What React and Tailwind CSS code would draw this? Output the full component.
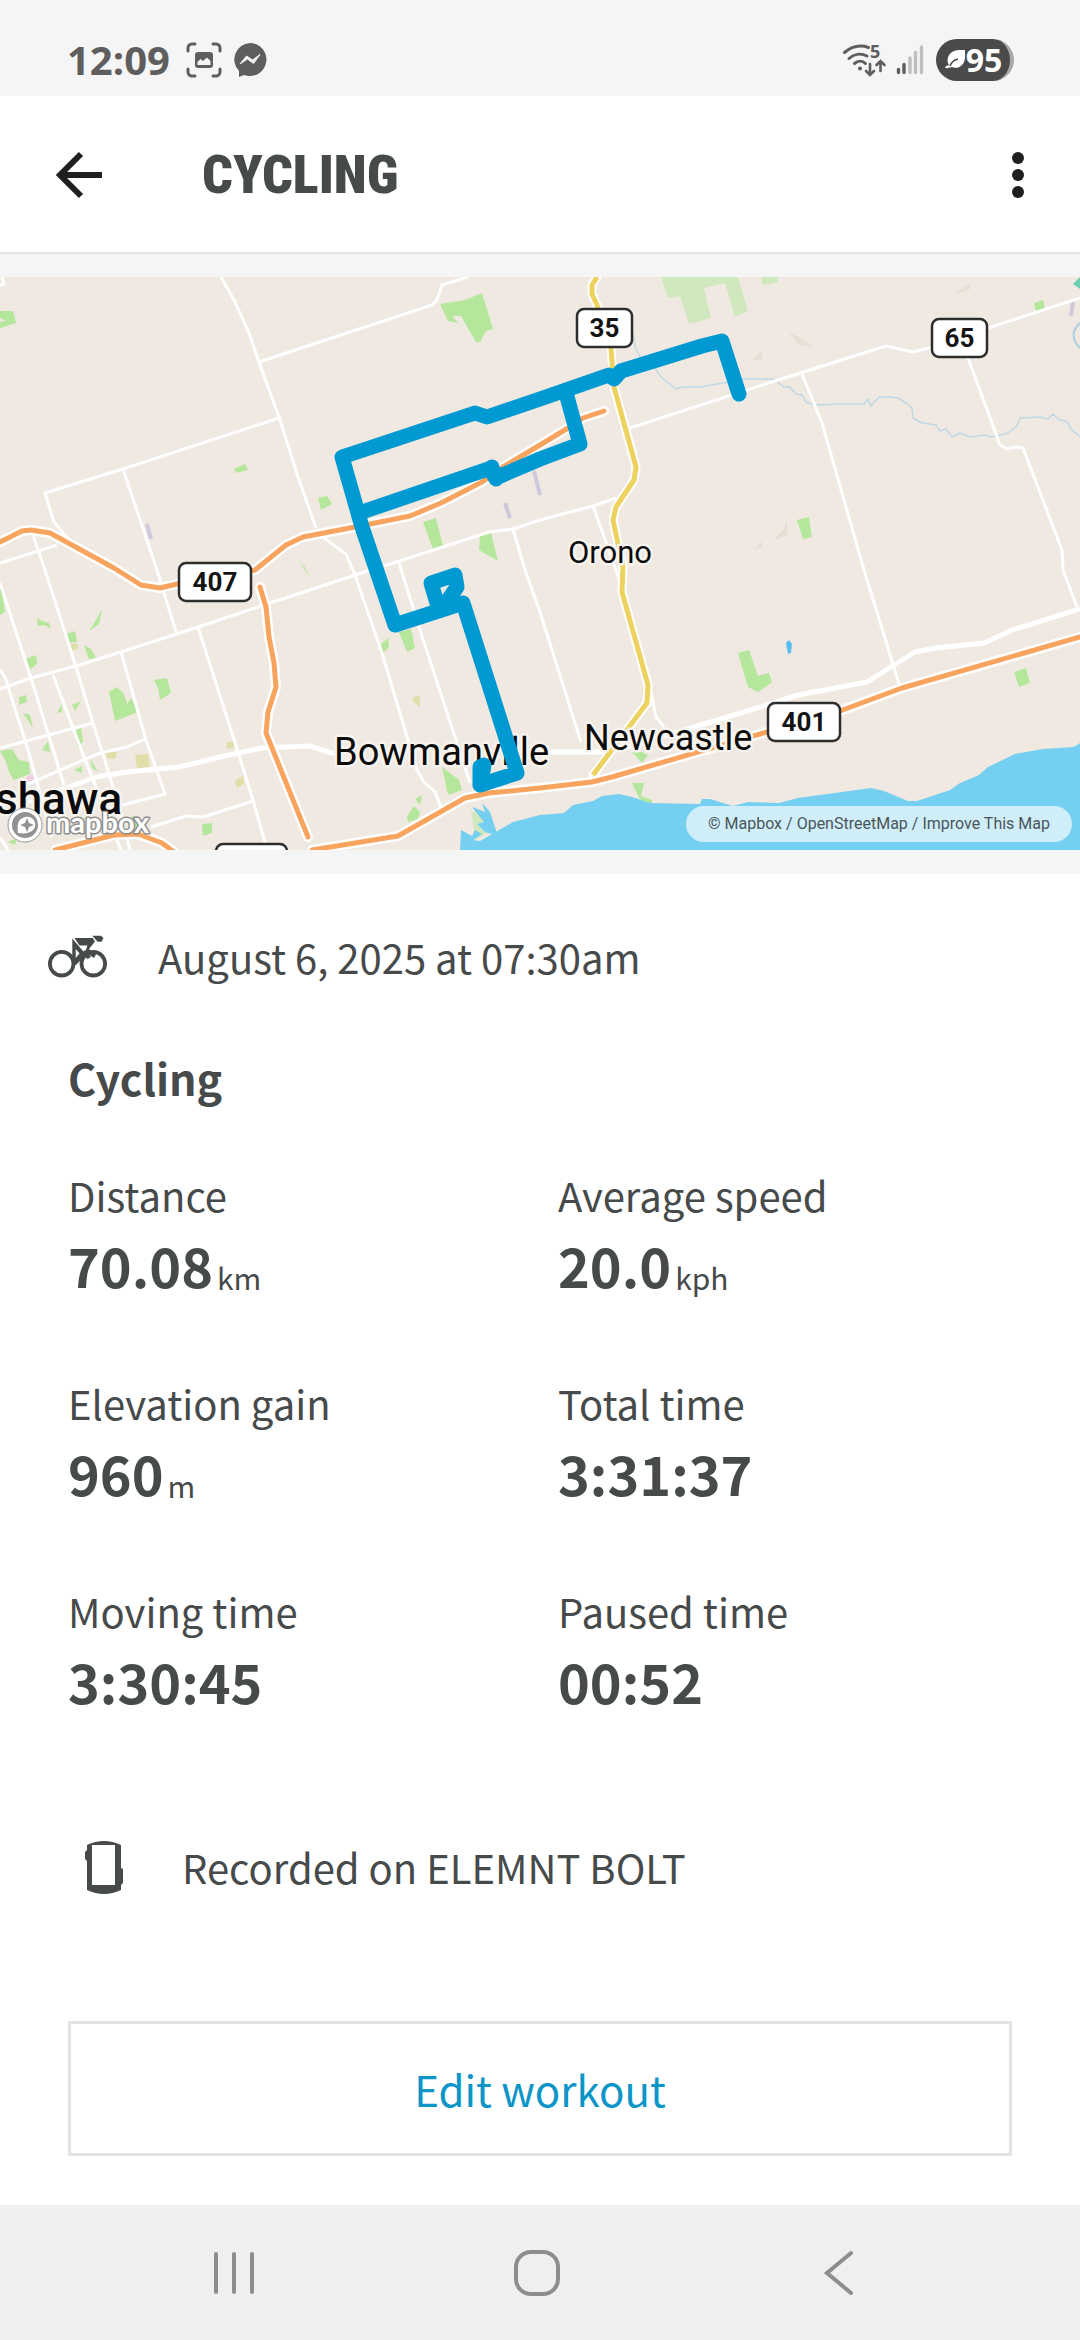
import React from "react";

const stats = [
  { label: "Distance", value: "70.08", unit: "km" },
  { label: "Average speed", value: "20.0", unit: "kph" },
  { label: "Elevation gain", value: "960", unit: "m" },
  { label: "Total time", value: "3:31:37" },
  { label: "Moving time", value: "3:30:45" },
  { label: "Paused time", value: "00:52" },
];

const shields = [
  { label: "35", x: 577, y: 32, w: 55 },
  { label: "65", x: 932, y: 42, w: 55 },
  { label: "407", x: 179, y: 286, w: 72 },
  { label: "401", x: 768, y: 426, w: 72 },
  { label: "", x: 216, y: 567, w: 71 },
];

const minorRoads = [
  "M221 0L235 25L249 56L259 85L279 140L298 200L316 251",
  "M259 85L432 28L437 23L442 8L468 0",
  "M279 141L123 192L45 216L54 245L65 258L69 263",
  "M123 192L157 293L176 355",
  "M0 8L4 7L2 0",
  "M33 258L45 293L76 390L93 446L110 500L130 573",
  "M0 286L57 268",
  "M324 261L346 277L355 298L382 376L417 493L424 505L435 515L441 530",
  "M384 289L489 255L513 252L540 243L593 229L616 221",
  "M0 412L31 401L76 389L121 375L198 350L355 298L371 293",
  "M513 252L525 293L540 335L581 465",
  "M593 229L616 293L650 410L656 440L664 450",
  "M399 286L420 353L470 506",
  "M198 350L238 475L253 523L267 573",
  "M121 375L146 463L165 517L103 533",
  "M53 398L84 480L104 530L121 573",
  "M0 306L31 401L64 508",
  "M0 393L5 400L28 473L52 560",
  "M0 471L93 446",
  "M21 510L100 476L127 470L145 462",
  "M151 550L186 539L203 540L253 524",
  "M0 560L8 573",
  "M630 151L778 103L886 69L913 75L933 70L988 51L1080 21",
  "M802 97L822 146L864 293L900 410",
  "M968 81L1000 168L1007 172L1015 170L1023 171L1062 273L1063 293L1077 330",
];

const mainRoads = [
  "M30 524L52 516L96 500L127 495L179 490L220 480L262 471L310 469L332 476",
  "M550 475L609 475L691 451L767 428L798 418L867 405L915 375L936 371L984 366L1012 353L1080 332",
];

const highways = [
  "M0 265L22 254L31 253L50 256L114 291L141 308L160 311L177 307L255 293L286 268L303 260L355 250L410 239L441 226L482 205L503 190L540 168L568 151L583 141L604 134",
  "M260 310L266 330L269 360L274 386L276 410L268 435L266 456L308 560",
  "M55 573L114 558L138 557L162 566L174 575",
  "M312 573L398 559L465 521L489 516L540 511L592 505L612 500L767 455L840 434L902 411L1080 360",
];

const yellowRoad =
  "M597 0L592 8L592 17L597 28L611 71L614 110L636 190L634 203L616 230L613 243L623 290L622 315L648 408L647 426L593 498";

const parks = [
  "M440 27L465 23L482 16L493 52L486 54L480 65L476 65L461 39L452 39L458 46L448 44Z",
  "M0 34L13 34L16 46L0 51L0 45L6 44L0 41Z",
  "M234 192L245 187L248 193L236 196Z",
  "M318 221L327 219L332 227L321 233Z",
  "M423 245L436 241L443 269L433 272Z",
  "M480 258L491 256L498 284L479 273Z",
  "M797 243L809 240L812 260L803 262Z",
  "M738 376L749 373L758 399L769 396L772 405L758 415L748 410Z",
  "M1014 395L1026 391L1030 406L1019 410Z",
  "M1034 26L1043 23L1045 32L1036 35Z",
  "M109 415L117 410L124 417L127 427L131 421L138 435L115 444Z",
  "M154 403L167 401L171 416L160 423L158 411Z",
  "M25 382L36 378L37 387L29 393Z",
  "M67 357L75 354L77 365L69 366Z",
  "M84 368L91 372L96 381L89 382Z",
  "M0 305L5 335L0 338Z",
  "M0 474L12 472L19 483L29 485L30 497L14 503L9 495L6 485Z",
  "M19 420L26 418L27 425L19 428Z",
  "M23 436L30 438L33 451Z",
  "M72 428L81 424L75 434Z",
  "M57 436L62 427L62 435Z",
  "M74 455L81 450L83 464L78 471Z",
  "M42 473L48 464L50 475Z",
  "M37 341L42 344L49 346L51 352L45 348L38 349Z",
  "M89 354L96 343L102 332L99 347Z",
  "M202 547L212 546L212 556L203 559Z",
  "M379 369L388 361L389 370L381 378Z",
  "M399 355L411 352L415 371L407 375Z",
  "M442 490L459 503L462 513L448 518Z",
  "M407 539L414 529L420 535L418 542L408 545Z",
  "M415 522L422 518L420 528Z",
  "M632 475L642 475L648 478L642 486Z",
  "M632 506L644 506L641 519L652 523L652 527L640 523Z",
  "M8 565L17 561L15 568Z",
  "M74 493L82 489L82 496Z",
  "M90 481L98 495L92 491Z",
  "M127 543L136 538L139 549L130 553Z",
];

const lake =
  "M461 573L472 563L480 564L513 545L540 538L564 536L573 528L593 524L602 519L619 517L632 520L650 526L700 527L702 522L710 522L733 529L748 525L779 526L798 521L871 511L884 514L908 524L917 524L950 513L960 506L979 498L988 490L1015 477L1043 472L1074 470L1080 466V573Z";

const river =
  "M631 45L635 70L640 80L655 91L661 100L676 112L683 110L700 110L723 106L745 102L774 102L784 110L790 110L796 117L802 118L806 125L815 128L840 127L864 127L868 122L871 129L879 120L890 120L898 121L906 126L912 131L913 141L922 146L936 148L940 154L946 152L952 160L960 156L970 160L985 158L992 160L1008 156L1016 150L1020 141L1040 140L1048 142L1053 137L1058 142L1067 145L1072 153L1080 160";

const routes = [
  "M739 117L722 64L702 69L621 94L614 102L609 98L540 122L487 140L475 136L342 180L362 250L395 348L463 326L517 496L480 508L480 490L484 488L483 494",
  "M566 116L580 167L540 182L498 200L491 191L362 235",
  "M492 190L490 192L496 202L500 198",
  "M437 326L431 306L455 298L457 310L446 326",
];

const StatusBar = () => (
  <div className="flex h-24 items-center justify-between bg-[#f5f5f5] pt-6 pr-[66px] pl-[67px] text-[#5e5e5e]">
    <div className="flex items-center">
      <span className="font-['Open_Sans',sans-serif] text-[40px] leading-10 font-bold">12:09</span>
      <svg className="ml-4 h-9 w-9" viewBox="0 0 36 36" fill="none" stroke="currentColor" strokeWidth="3" strokeLinecap="round">
        <path d="M2 9V6a4 4 0 0 1 4-4h3M27 2h3a4 4 0 0 1 4 4v3M34 27v3a4 4 0 0 1-4 4h-3M9 34H6a4 4 0 0 1-4-4v-3" />
        <rect x="9" y="10" width="18" height="16" rx="3" fill="currentColor" stroke="none" />
        <path d="M11.500 23v-3l3-3 2.500 2 4-3.500 3.500 3.500v4z" fill="#f5f5f5" stroke="none" />
      </svg>
      <svg className="ml-2.5 h-9 w-9" viewBox="0 0 36 36" fill="currentColor">
        <path d="M18 1a16.500 16.500 0 1 1-6 31.900L7 35v-6A16.500 16.500 0 0 1 18 1z" />
        <path d="M8 22l6.500-8 6 4 7.500-5.500-6.500 9-6-4.500z" fill="#f5f5f5" stroke="#f5f5f5" strokeLinejoin="round" />
      </svg>
    </div>
    <div className="flex items-center">
      <svg className="h-9 w-[43px] overflow-visible" viewBox="0 0 43 36" fill="none" stroke="currentColor" strokeWidth="3" strokeLinecap="round">
        <path d="M1.500 10.500C9 4 18 3 25.500 5.500M6 16.500c5-4.500 12-5.500 18-2.500M11.500 21.500c3.500-3 8-3 11 0" />
        <circle cx="17" cy="26.500" r="2" fill="currentColor" stroke="none" />
        <path d="M27 22v10M23 29l4 4 4-4M37.500 29V19M33.500 23l4-4 4 4" strokeWidth="2.600" />
        <text x="27" y="16" className="font-['Noto_Sans',sans-serif] text-[18px] font-bold" fill="currentColor" stroke="none">5</text>
      </svg>
      <svg className="ml-2.5 h-9 w-7" viewBox="0 0 28 36" stroke="currentColor" strokeWidth="3.400" strokeLinecap="round">
        <path d="M2.500 27.500v3M8 22.500v8" />
        <path d="M14 16v14.500M19.500 10.500v20M25.500 5v25.500" opacity=".35" />
      </svg>
      <div className="ml-3 flex h-[42px] w-[78px] items-center justify-center rounded-full border-r-4 border-[#a8a8a8] bg-[#4a4a4a] text-white">
        <svg className="h-6 w-[22px]" viewBox="0 0 22 24" fill="#fff">
          <path d="M21 2c0 6 1 11-3 15-3 3-7 3.500-10 2-2 .500-4 1.500-7 1 .500-2 2-2.500 4-3C2 12 4 7 8 4c4-2.500 9-2 13-2z" />
          <path d="M6 18c1-3 4-6 8-7" stroke="#4a4a4a" strokeWidth="1.600" fill="none" />
        </svg>
        <span className="font-['Open_Sans',sans-serif] text-[32px] leading-10 font-bold">95</span>
      </div>
    </div>
  </div>
);

const RouteMap = () => (
  <div className="relative font-['Roboto',sans-serif]">
    <svg className="block h-auto w-full" viewBox="0 0 1080 573" fill="none" strokeLinejoin="round">
      <rect width="1080" height="573" fill="#f0e9e1" />
      <path d="M661 0H738L748 34L735 40L725 6L704 11L711 41L689 47L680 19L668 21ZM761 0H778V5L763 8Z" fill="#d0e8bd" />
      {parks.map((d) => (
        <path key={d} d={d} fill="#b4e79b" />
      ))}
      <path d="M299 283L305 289L310 300L304 293Z" fill="#d0e8bd" />
      <path d="M70 367h8v5l-6 2zM105 475l12 0-2 7-8-1zM135 478l13-1 2 13-13 1zM226 466l8-2v7l-7 1zM235 504l8-5 1 8-7 4zM412 421l8-3v12l-6-5z" fill="#e2deaa" />
      <path d="M26 500l7-3 2 6-8 3z" fill="#f1cfe0" />
      <path d="M954 18L970 6V12ZM789 55L800 61L814 70L798 68ZM750 84L762 74V82ZM773 264L784 252L787 242V258ZM754 273L762 264V270Z" fill="#e7dfd5" />
      <path d="M147 247L151 262M505 226L510 241M534 194L540 218M1073 25L1071 39" stroke="#cdc8db" strokeWidth="4" />
      <path d={river} stroke="#bfd8e5" strokeWidth="1.500" />
      <path d={lake} fill="#75cff0" />
      <path d="M471 536l8-3 9 22-12 8z" fill="#d0e8bd" />
      <path d="M472 530l13 5-3-9 8 9 4 12 4 12-13-4-8-8 7-2zM461 553l11 6 3-6 7 4-10 7-12 10z" fill="#75cff0" />
      <path d="M786 366l3-3 3 4-1 9-3 1z" fill="#58bdf0" />
      <path d="M1073 7L1080 0V12Z" fill="#6fcfb5" />
      <path d="M1080 46Q1067 58 1080 71" stroke="#a8cfe3" strokeWidth="2" />
      {minorRoads.map((d) => (
        <path key={d} d={d} stroke="#fff" strokeWidth="3" />
      ))}
      {mainRoads.map((d) => (
        <path key={d} d={d} stroke="#fff" strokeWidth="5" strokeLinecap="round" />
      ))}
      {highways.map((d) => (
        <path key={d} d={d} stroke="#fff" strokeWidth="10" strokeLinecap="round" />
      ))}
      <path d={yellowRoad} stroke="#fff" strokeWidth="9" strokeLinecap="round" />
      <path d={yellowRoad} stroke="#edd25f" strokeWidth="5" />
      {highways.map((d) => (
        <path key={d} d={d} stroke="#f8a45e" strokeWidth="5" strokeLinecap="round" />
      ))}
      <g fill="#0b0b0b" stroke="#f7f3ee" strokeWidth="5" paintOrder="stroke">
        <text x="568" y="286" fontSize="31">Orono</text>
        <text x="334" y="488" fontSize="38">Bowmanville</text>
        <text x="584" y="473" fontSize="36">Newcastle</text>
        <text x="-5" y="537" fontSize="44" fontWeight="500">shawa</text>
      </g>
      {shields.map((s) => (
        <g key={s.x}>
          <rect x={s.x} y={s.y} width={s.w} height="38" rx="7" fill="#fff" stroke="#2d2d2d" strokeWidth="2.500" />
          <text x={s.x + s.w / 2} y={s.y + 28} textAnchor="middle" fontSize="26" fontWeight="700" fill="#141414">
            {s.label}
          </text>
        </g>
      ))}
      {routes.map((d) => (
        <path key={d} d={d} stroke="#0099d2" strokeWidth="15" strokeLinecap="round" />
      ))}
      <circle cx="25" cy="548" r="15" fill="#929292" stroke="#fff" strokeWidth="4" />
      <circle cx="25" cy="548" r="17" stroke="#999" strokeWidth="1" />
      <path d="M18 556c-1-8 0-12 3-14 4-3 9-3 12 0 3 4 3 8 0 11-3 3-8 4-15 3z" fill="#fff" />
      <path d="M27 541l2 5 5 2-5 2-2 5-2-5-5-2 5-2z" fill="#929292" />
      <text x="46" y="556" fontSize="29" fontWeight="700" fill="#fff" stroke="#8e8e8e" strokeWidth="3" paintOrder="stroke" className="font-['Lato',sans-serif]">
        mapbox
      </text>
    </svg>
    <div className="absolute right-2 bottom-2 flex h-9 items-center gap-1 rounded-full bg-white/65 px-[22px] text-base text-[#4b5559]">
      <a href="#mapbox">© Mapbox</a>
      <span>/</span>
      <a href="#osm">OpenStreetMap</a>
      <span>/</span>
      <a href="#improve">Improve This Map</a>
    </div>
  </div>
);

const NavBar = () => (
  <nav className="flex h-[135px] items-center justify-between bg-[#efeff1] pr-[217px] pl-[210px] text-[#8d8d8f]">
    <button type="button" aria-label="Recent apps">
      <svg className="h-12 w-12" viewBox="0 0 48 48" fill="none" stroke="currentColor" strokeWidth="4" strokeLinecap="round">
        <path d="M6 5v38M24 5v38M42 5v38" />
      </svg>
    </button>
    <button type="button" aria-label="Home">
      <svg className="h-12 w-12" viewBox="0 0 48 48" fill="none" stroke="currentColor" strokeWidth="4">
        <rect x="3" y="3" width="42" height="42" rx="15" />
      </svg>
    </button>
    <button type="button" aria-label="Back">
      <svg className="h-12 w-12" viewBox="0 0 48 48" fill="none" stroke="currentColor" strokeWidth="4" strokeLinecap="round">
        <path d="M36 4L12 24L36 44" />
      </svg>
    </button>
  </nav>
);

const App = () => {
  return (
    <div className="flex min-h-screen flex-col bg-white font-['Noto_Sans_CJK_SC',sans-serif] text-[#474a4a]">
      <StatusBar />

      <header className="flex h-[158px] items-center border-b-2 border-[#e4e4e4] pt-0.5 pr-10 pl-14 text-[#1f1f1f]">
        <button type="button" aria-label="Go back">
          <svg className="h-12 w-12" viewBox="0 0 48 48" fill="none" stroke="currentColor" strokeWidth="6">
            <path d="M46 24H5M25 3L4 24L25 45" />
          </svg>
        </button>
        <h1 className="ml-[98px] flex-1 font-['Roboto_Condensed','Liberation_Sans_Narrow','Roboto',sans-serif] text-[54px] leading-none font-black text-[#474a4a]">
          CYCLING
        </h1>
        <button type="button" aria-label="More options">
          <svg className="h-12 w-11" viewBox="0 0 44 48" fill="currentColor">
            <circle cx="22" cy="7" r="6" />
            <circle cx="22" cy="24" r="6" />
            <circle cx="22" cy="41" r="6" />
          </svg>
        </button>
      </header>

      <div className="bg-[#f5f5f5] pt-[23px] pb-6">
        <RouteMap />
      </div>

      <main className="flex-1">
        <div className="flex items-center pt-[53px] pl-12">
          <svg className="h-11 w-[61px]" viewBox="0 0 61 44" fill="none">
            <circle cx="13.700" cy="28.700" r="11.800" stroke="currentColor" strokeWidth="3.800" />
            <circle cx="45.300" cy="28.700" r="11.800" stroke="currentColor" strokeWidth="3.800" />
            <g fill="currentColor">
              <path d="M26.500 3H44.700L47 6.500L41 14L44 16.500L48 19.500L46 23L37 17L39.500 10.500L31.500 10.500Z" />
              <path fillRule="evenodd" d="M24.300 3.500L38 19.500L28 30L24.300 27ZM27.700 14V23L31.500 18.500Z" />
              <path d="M37 15L43 22L39.500 24L34 18Z" />
              <path d="M44.300 0.700H53L55.500 3L53.500 6.700H49.700Z" />
            </g>
          </svg>
          <span className="ml-[49px] text-[40px] leading-[60px]">August 6, 2025 at 07:30am</span>
        </div>

        <div className="px-[68px]">
          <h2 className="mt-[60px] text-[43px] leading-[60px] font-bold">Cycling</h2>

          <dl className="mt-[58px] grid grid-cols-2 gap-x-9 gap-y-[68px]">
            {stats.map((stat) => (
              <div key={stat.label}>
                <dt className="text-[40px] leading-[60px]">{stat.label}</dt>
                <dd className="flex items-end gap-1">
                  <span className="text-[54px] leading-[80px] font-bold">{stat.value}</span>
                  {stat.unit && <span className="pb-1.5 text-[30px] leading-[44px]">{stat.unit}</span>}
                </dd>
              </div>
            ))}
          </dl>

          <div className="mt-[116px] flex items-center pl-4">
            <svg className="h-14 w-10" viewBox="0 0 40 56" fill="none">
              <path d="M3 6Q20-2 37 6V29l2 1V44l-2 2v5Q20 59 3 51V22l-2-2V13l2-2z" fill="currentColor" />
              <rect x="8" y="6" width="23" height="40" fill="#fff" />
            </svg>
            <span className="ml-[58px] text-[40px] leading-[60px]">Recorded on ELEMNT BOLT</span>
          </div>

          <button type="button" className="mt-[124px] mb-11 h-[135px] w-full border-[3px] border-[#e4e4e4] text-[42px] text-[#0c95c6]">
            Edit workout
          </button>
        </div>
      </main>

      <NavBar />
    </div>
  );
};

export default App;
